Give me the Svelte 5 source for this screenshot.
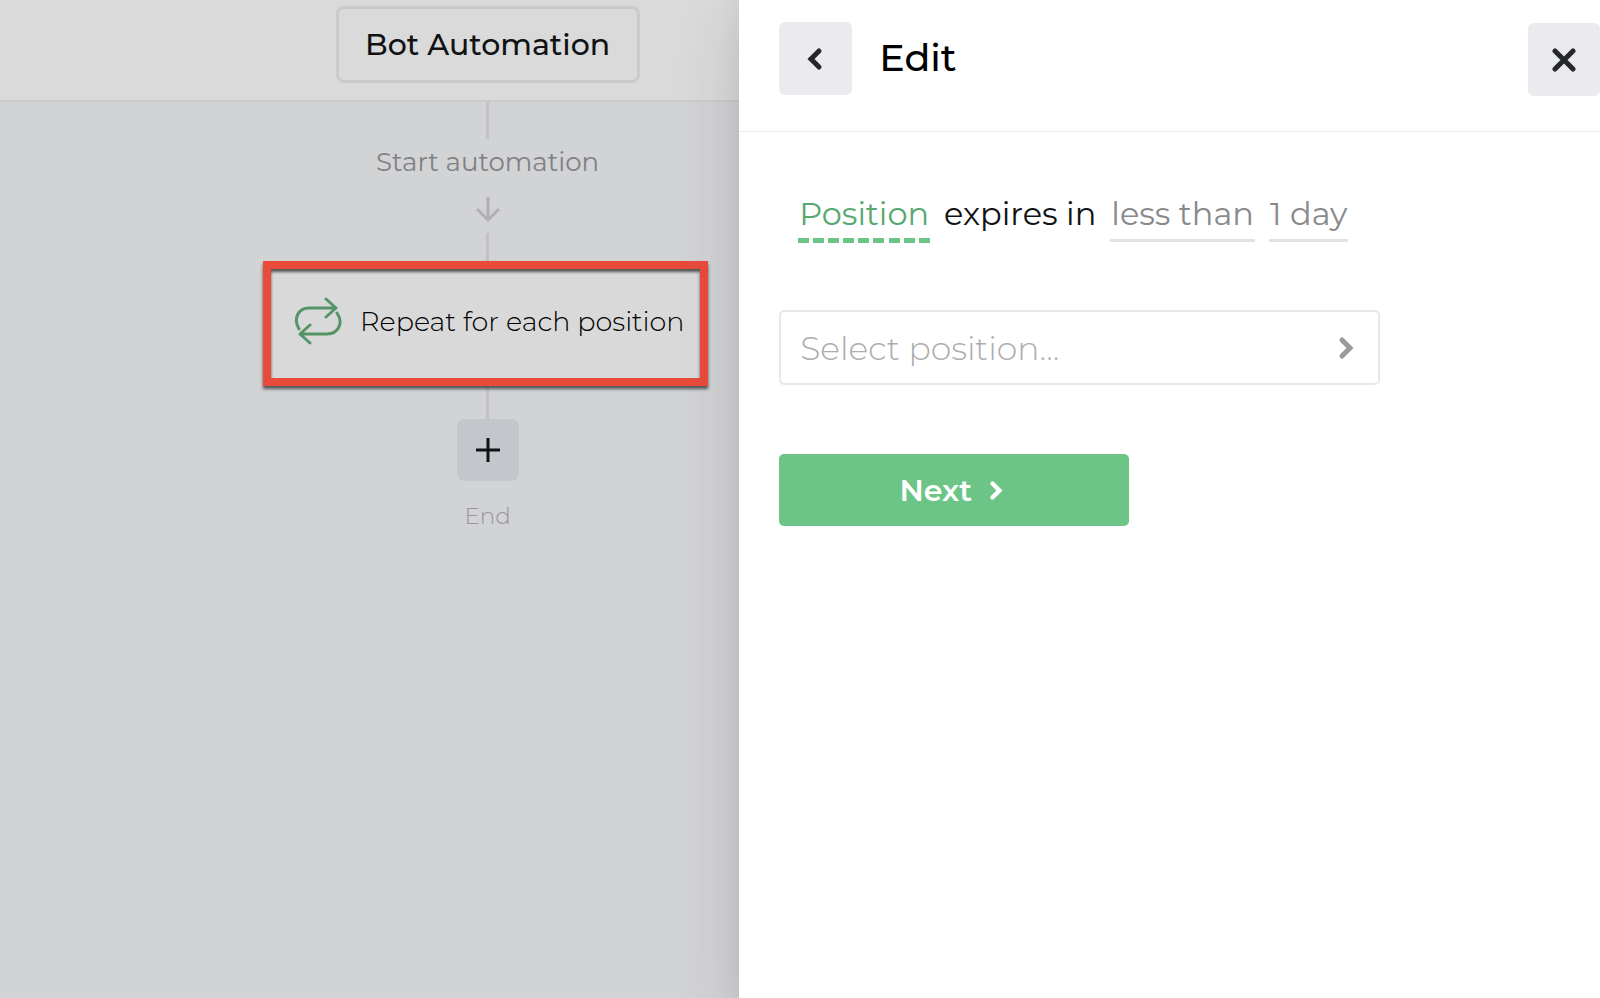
<script lang="ts">
  let title = 'Edit';
  let botName = 'Bot Automation';

  const chevronLeft = 'M12 4 L4 12 L12 20';
  const chevronRight = 'M5 4 L13 12 L5 20';
</script>

<div class="app">
  <section class="editor">
    <header class="toolbar">
      <button class="bot-name">{botName}</button>
    </header>

    <div class="canvas">
      <span class="line line-start"></span>
      <span class="start">Start automation</span>
      <svg class="arrow" width="26" height="26" viewBox="0 0 26 26" aria-hidden="true">
        <path d="M13 1 V23 M2 13 L13 24 L24 13" />
      </svg>
      <span class="line line-mid"></span>

      <div class="highlight">
        <button class="action">
          <svg class="repeat" width="48" height="48" viewBox="0 0 48 48" aria-hidden="true">
            <path d="M5 32 C-1 22 4 11 15 11 H41 M32 2 L42 11 L32 20" />
            <path d="M43 16 C50 26 44 37 33 37 H7 M16 28 L6 37 L16 46" />
          </svg>
          <span>Repeat for each position</span>
        </button>
      </div>

      <span class="line line-end"></span>
      <button class="add" aria-label="Add action">
        <svg width="26" height="26" viewBox="0 0 26 26" aria-hidden="true">
          <path d="M13 1 V25 M1 13 H25" />
        </svg>
      </button>
      <span class="end">End</span>
    </div>
  </section>

  <aside class="drawer">
    <header class="drawer-header">
      <button class="square" aria-label="Back">
        <svg width="17" height="24" viewBox="0 0 17 24" aria-hidden="true">
          <path d={chevronLeft} />
        </svg>
      </button>
      <h1>{title}</h1>
      <button class="square close" aria-label="Close">
        <svg width="24" height="24" viewBox="0 0 24 24" aria-hidden="true">
          <path d="M3 3 L21 21 M21 3 L3 21" />
        </svg>
      </button>
    </header>

    <div class="drawer-body">
      <div class="sentence">
        <button class="token active">Position</button>
        <span class="verb">expires in</span>
        <button class="token">less than</button>
        <button class="token">1 day</button>
      </div>

      <button class="picker">
        <span>Select position...</span>
        <svg width="17" height="24" viewBox="0 0 17 24" aria-hidden="true">
          <path d={chevronRight} />
        </svg>
      </button>

      <button class="next">
        <span>Next</span>
        <svg width="15" height="21" viewBox="0 0 17 24" aria-hidden="true">
          <path d={chevronRight} />
        </svg>
      </button>
    </div>
  </aside>
</div>

<style>
  :global(body) {
    margin: 0;
  }
  .app {
    display: flex;
    min-height: 100vh;
    overflow: hidden;
    font-family: Montserrat, Inter, 'Liberation Sans', sans-serif;
    color: #111214;
  }
  button {
    box-sizing: border-box;
    margin: 0;
    padding: 0;
    border: 0;
    background: none;
    font: inherit;
    color: inherit;
    white-space: nowrap;
    cursor: pointer;
  }
  svg {
    display: block;
    flex: none;
    fill: none;
    stroke: currentColor;
  }

  /* flow editor, dimmed while the drawer is open */
  .editor {
    flex: 1;
    min-width: 0;
    display: flex;
    flex-direction: column;
    background: #d2d3d5;
  }
  .toolbar {
    box-sizing: border-box;
    height: 102px;
    padding: 6px 0 0 236px;
    display: flex;
    justify-content: center;
    align-items: flex-start;
    background: #dadada;
    border-bottom: 2px solid #cbcbcd;
  }
  .bot-name {
    height: 77px;
    width: 304px;
    border: 3px solid #cacacc;
    border-radius: 8px;
    font-size: 30px;
    font-weight: 500;
  }
  .canvas {
    padding-left: 236px;
    display: flex;
    flex-direction: column;
    align-items: center;
  }
  .line {
    width: 3px;
    background: #c2c2c4;
  }
  .line-start {
    height: 37px;
  }
  .line-mid {
    margin-top: 11px;
    height: 28px;
  }
  .line-end {
    height: 33px;
  }
  .start {
    padding: 7px 0 18px;
    font-size: 26px;
    line-height: 32px;
    color: #808083;
  }
  .arrow {
    color: #b0b0b3;
    stroke-width: 3;
  }
  .highlight {
    position: relative;
    z-index: 1;
    box-sizing: border-box;
    width: 445px;
    height: 125px;
    margin: 0 4px 0 0;
    border: 8px solid #e94b3b;
    background: #d9d9d9;
    box-shadow: 0 3px 3px #555, inset 0 3px 3px #555;
  }
  .action {
    width: 100%;
    height: 104px;
    padding: 0 0 0 23px;
    display: flex;
    align-items: center;
    gap: 18px;
    font-size: 27px;
    font-weight: 300;
    color: #000;
  }
  .repeat {
    color: #559466;
    stroke-width: 3;
    stroke-linecap: round;
    stroke-linejoin: round;
  }
  .add {
    width: 62px;
    height: 62px;
    border-radius: 8px;
    display: grid;
    place-items: center;
    background: #c5c6cb;
    stroke-width: 3;
  }
  .end {
    margin-top: 19px;
    font-size: 23px;
    line-height: 32px;
    font-weight: 300;
    color: #98989a;
  }

  .drawer {
    position: relative;
    z-index: 2;
    width: 53.8%;
    background: #fff;
    box-shadow: 0 20px 60px rgba(60, 45, 65, 0.16), 0 0 20px rgba(60, 45, 65, 0.08);
  }
  .drawer-header {
    box-sizing: border-box;
    height: 132px;
    padding: 22px 0 0 40px;
    display: flex;
    align-items: flex-start;
    border-bottom: 1px solid #ebebed;
  }
  .square {
    width: 73px;
    height: 73px;
    border-radius: 6px;
    display: grid;
    place-items: center;
    background: #eaeaef;
    color: #24272c;
    stroke-width: 5;
    stroke-linecap: round;
  }
  .close {
    width: 72px;
    margin: 1px 0 0 auto;
  }
  h1 {
    margin: 0 0 0 27px;
    font-size: 38px;
    line-height: 72px;
    font-weight: 500;
    color: #000;
  }
  .drawer-body {
    padding: 62px 40px;
    display: flex;
    flex-direction: column;
    align-items: flex-start;
  }
  .sentence {
    padding-left: 19px;
    display: flex;
    align-items: flex-start;
    gap: 14px;
    font-size: 32px;
    line-height: 40px;
    white-space: nowrap;
  }
  .verb {
    color: #111214;
  }
  .token {
    height: 48px;
    padding: 0 1px 8px;
    border-bottom: 3px solid #e2e2e3;
    color: #89898b;
  }
  .active {
    --step: calc((100% + 4px) / 9);
    height: 49px;
    border: 0;
    padding-bottom: 9px;
    color: #58a870;
    background: repeating-linear-gradient(90deg, #6dc487 0 11px, transparent 11px var(--step)) bottom / 100% 5px no-repeat;
  }
  .picker {
    width: 601px;
    max-width: 100%;
    height: 75px;
    margin-top: 67px;
    padding: 0 24px 0 19px;
    display: flex;
    align-items: center;
    justify-content: space-between;
    border: 2px solid #e8e8e9;
    border-radius: 5px;
    font-size: 33px;
    line-height: 40px;
    font-weight: 300;
    color: #adadaf;
  }
  .picker svg {
    color: #9a9a9c;
    stroke-width: 5;
    stroke-linecap: round;
  }
  .next {
    width: 350px;
    height: 72px;
    margin-top: 69px;
    padding-right: 6px;
    display: flex;
    align-items: center;
    justify-content: center;
    gap: 16px;
    border-radius: 5px;
    background: #6cc487;
    color: #fff;
    font-size: 30px;
    font-weight: 600;
  }
  .next svg {
    stroke-width: 5;
    stroke-linecap: round;
  }
</style>
